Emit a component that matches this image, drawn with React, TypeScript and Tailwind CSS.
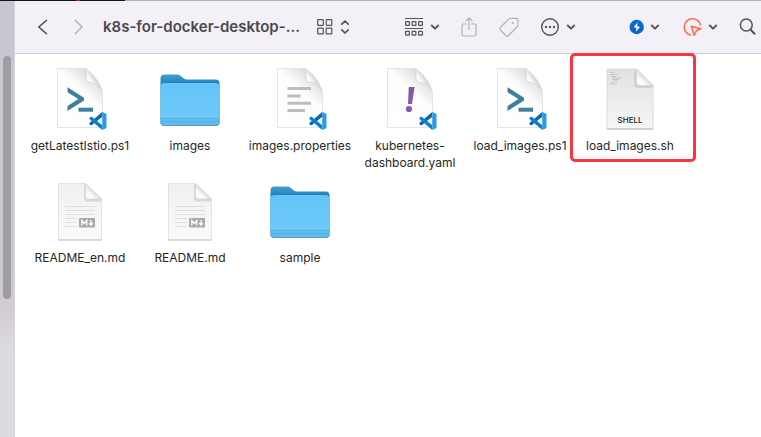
import type { ReactNode } from "react";

type Kind = "powershell" | "folder" | "properties" | "yaml" | "shell" | "markdown";

const files: { name: string; lines?: string[]; kind: Kind; marked?: boolean }[] = [
  { name: "getLatestIstio.ps1", kind: "powershell" },
  { name: "images", kind: "folder" },
  { name: "images.properties", kind: "properties" },
  { name: "kubernetes-dashboard.yaml", lines: ["kubernetes-", "dashboard.yaml"], kind: "yaml" },
  { name: "load_images.ps1", kind: "powershell" },
  { name: "load_images.sh", kind: "shell", marked: true },
  { name: "README_en.md", kind: "markdown" },
  { name: "README.md", kind: "markdown" },
  { name: "sample", kind: "folder" },
];

function Gradients() {
  return (
    <svg width="0" height="0" className="absolute" aria-hidden="true">
      <defs>
        <linearGradient id="page" x1="0.15" y1="1" x2="0.85" y2="0">
          <stop offset="0" stopColor="#ffffff" />
          <stop offset="0.6" stopColor="#fdfdfd" />
          <stop offset="0.82" stopColor="#e4e4e4" />
          <stop offset="1" stopColor="#d0d0d0" />
        </linearGradient>
        <linearGradient id="curl" x1="0" y1="1" x2="1" y2="0">
          <stop offset="0" stopColor="#ffffff" />
          <stop offset="0.4" stopColor="#f8f8f8" />
          <stop offset="0.6" stopColor="#cdcdcd" />
          <stop offset="1" stopColor="#e8e8e8" />
        </linearGradient>
        <linearGradient id="sheet" x1="0" y1="0" x2="0" y2="1">
          <stop offset="0" stopColor="#e2e2e2" />
          <stop offset="0.5" stopColor="#ececec" />
          <stop offset="1" stopColor="#f6f6f6" />
        </linearGradient>
        <linearGradient id="paper" x1="0" y1="0" x2="0" y2="1">
          <stop offset="0" stopColor="#f0f0f0" />
          <stop offset="1" stopColor="#fafafa" />
        </linearGradient>
        <linearGradient id="fold" x1="0" y1="1" x2="1" y2="0">
          <stop offset="0" stopColor="#ffffff" />
          <stop offset="0.3" stopColor="#fafafa" />
          <stop offset="0.5" stopColor="#dedede" />
        </linearGradient>
        <linearGradient id="tab" x1="0" y1="6" x2="0" y2="18" gradientUnits="userSpaceOnUse">
          <stop offset="0" stopColor="#469fd2" />
          <stop offset="1" stopColor="#1678b8" />
        </linearGradient>
        <linearGradient id="front" x1="0" y1="0" x2="0" y2="1">
          <stop offset="0" stopColor="#66c3f5" />
          <stop offset="0.8" stopColor="#6cc9fa" />
          <stop offset="0.85" stopColor="#60bef0" />
          <stop offset="1" stopColor="#5fbcec" />
        </linearGradient>
        <linearGradient id="bolt" x1="0" y1="0" x2="0" y2="1">
          <stop offset="0" stopColor="#0a6fd6" />
          <stop offset="1" stopColor="#0562cb" />
        </linearGradient>
      </defs>
    </svg>
  );
}

function CodePage({ children }: { children: ReactNode }) {
  return (
    <>
      <path d="M7.500 0.500H36Q49 11 52.500 24v35.500h-45z" fill="url(#page)" stroke="#dedede" strokeWidth="0.8" />
      <path d="M36 0.500v11.500q0 2.500 2.500 2.500q9.500 0 14 9.500Q49 11 36 0.500z" fill="url(#curl)" />
      <path d="M36 0.500v11q0 2.500 2.500 2.500q8 0 14 9" fill="none" stroke="#cdcdcd" strokeWidth="0.7" />
      {children}
      <g transform="translate(39 44) scale(0.18)">
        <path d="M72 1L2 61v5l7 7h6l59-46z" fill="#0469b0" />
        <path d="M72 99L2 39v-5l7-7h6l59 46z" fill="#0a7fd1" />
        <path d="M71 1l4-1 22 11v78L75 100l-4-1q3-2 3-6V7q0-4-3-6z" fill="#219bf0" />
      </g>
    </>
  );
}

function FileArt({ kind }: { kind: Kind }) {
  return (
    <svg viewBox="0 0 60 60" className="size-15 overflow-visible" aria-hidden="true">
      {kind === "folder" && (
        <>
          <path d="M0.500 55V10.500q0-4 4-4H17q2 0 3.500 1.300l3 2.500q1.500 1.200 3.500 1.200h28.500q4 0 4 4V55q0 2.500-3 2.500H3.500q-3 0-3-2.500z" fill="url(#tab)" />
          <path d="M0.500 19q0-4 4-4h51q4 0 4 4v35q0 3.500-3.500 3.500H4q-3.500 0-3.500-3.500z" fill="url(#front)" />
          <path d="M0.500 50.500h59M0.500 53.500h59" stroke="#50aede" strokeWidth="0.8" />
          <path d="M1 55.500q0.500 2 3 2h52q2.500 0 3-2" fill="none" stroke="#5596b8" strokeWidth="0.8" />
        </>
      )}
      {kind === "powershell" && (
        <CodePage>
          <path d="M17.500 19.300L34 29.700v2.800L17.500 43v-5l10.800-6.900L17.500 24.300z" fill="#3f809e" />
          <path d="M28.500 39.700H43v4H28.500z" fill="#3f809e" />
        </CodePage>
      )}
      {kind === "properties" && (
        <CodePage>
          <path d="M17.500 20.500h23.500M17.500 28h13M17.500 35.300h23.500M17.500 42.500h17.500" stroke="#b9bdbc" strokeWidth="3" />
        </CodePage>
      )}
      {kind === "yaml" && (
        <CodePage>
          <path d="M28.800 19h5.800l-2.600 17h-4z" fill="#8757a8" />
          <circle cx="29" cy="41" r="3.100" fill="#8757a8" />
        </CodePage>
      )}
      {kind === "shell" && (
        <>
          <path d="M7 1h29.500L53 17.500V61H7z" fill="url(#sheet)" stroke="#d6d6d6" strokeWidth="0.8" />
          <path d="M7 61h46" stroke="#b4b4b4" />
          <path d="M34 1.500v15q0 3.500 3.500 3.500H53l-1-2.500z" fill="#c3c3c3" opacity="0.6" />
          <path d="M36.500 1v13q0 3.500 3.500 3.500h13z" fill="url(#fold)" stroke="#c8c8c8" strokeWidth="0.5" />
          <path d="M10 4.500h4M10 6.500h7M11 8.500h5M12 9.800h9M12 11.500h7M13 13.200h5M11 14.800h3M10 16h7" stroke="#b2b2b2" strokeWidth="0.6" />
          <text x="30" y="55" textAnchor="middle" fontSize="8" fontWeight="500" fill="#222222" fontFamily="Inter, sans-serif">SHELL</text>
        </>
      )}
      {kind === "markdown" && (
        <>
          <path d="M8.500 3.500h27L51.500 19v41h-43z" fill="url(#paper)" stroke="#dedede" strokeWidth="0.8" />
          <path d="M8.500 60h43" stroke="#c0c0c0" />
          <path d="M34 4v14q0 3.500 3.500 3.500h14l-1-3z" fill="#c6c6c6" opacity="0.6" />
          <path d="M35.500 3.500V16q0 3 3 3h13z" fill="url(#fold)" stroke="#c8c8c8" strokeWidth="0.5" />
          <path d="M15 26.500h30M15 30.500h30M15 34.500h30M15 38.500h12M15 42.500h12M15 46.500h12" stroke="#dfdfdf" />
          <rect x="29" y="38" width="16" height="9.500" rx="1" fill="#a9a9a9" />
          <path d="M31.800 45.500v-5l2.500 3 2.500-3v5" fill="none" stroke="#ffffff" strokeWidth="1.300" />
          <path d="M41 40v4.500M39.200 43l1.800 2.200 1.800-2.200" fill="none" stroke="#ffffff" strokeWidth="1.300" />
        </>
      )}
    </svg>
  );
}

function Down() {
  return (
    <svg viewBox="0 0 8 8" className="size-2 overflow-visible" fill="none" stroke="#55535a" strokeWidth="1.800" strokeLinecap="round" strokeLinejoin="round">
      <path d="M0.800 2.500L4 5.700l3.200-3.200" />
    </svg>
  );
}

function ToolButton({ label, children }: { label: string; children: ReactNode }) {
  return (
    <button type="button" aria-label={label} className="flex shrink-0 items-center gap-2">
      {children}
    </button>
  );
}

function Toolbar() {
  return (
    <header className="flex h-[53px] items-center border-b border-[#d3d1d6] bg-[#f3f0f7] pr-1.5 pl-[22px] text-[#55535a]">
      <nav className="flex items-center gap-6">
        <ToolButton label="Back">
          <svg viewBox="0 0 12 16" className="h-4 w-3" fill="none" stroke="#4b494f" strokeWidth="1.500" strokeLinecap="round" strokeLinejoin="round">
            <path d="M9.500 1.300L1.800 8l7.700 6.700" />
          </svg>
        </ToolButton>
        <ToolButton label="Forward">
          <svg viewBox="0 0 12 16" className="h-4 w-3" fill="none" stroke="#b4b1b8" strokeWidth="1.500" strokeLinecap="round" strokeLinejoin="round">
            <path d="M2.300 1.300L9 8l-6.700 6.700" />
          </svg>
        </ToolButton>
      </nav>
      <h1 className="ml-[18px] w-[196px] shrink-0 text-[15px] leading-5 font-semibold whitespace-nowrap text-[#4b494f]">k8s-for-docker-desktop-...</h1>
      <div className="ml-[18px] flex">
        <ToolButton label="View as icons">
          <svg viewBox="0 0 16 16" className="size-4" fill="none" stroke="currentColor" strokeWidth="1.200">
            <rect x="0.700" y="0.700" width="5.600" height="5.600" rx="0.600" />
            <rect x="9.200" y="0.700" width="5.600" height="5.600" rx="0.600" />
            <rect x="0.700" y="9.200" width="5.600" height="5.600" rx="0.600" />
            <rect x="9.200" y="9.200" width="5.600" height="5.600" rx="0.600" />
          </svg>
          <svg viewBox="0 0 8 14" className="h-3.5 w-2 overflow-visible" fill="none" stroke="currentColor" strokeWidth="1.700" strokeLinecap="round" strokeLinejoin="round">
            <path d="M0.800 4.200L4 1l3.200 3.200M0.800 9.800L4 13l3.200-3.200" />
          </svg>
        </ToolButton>
      </div>
      <div className="ml-auto flex items-center gap-[22px]">
        <ToolButton label="Group items">
          <svg viewBox="0 0 18 18" className="size-4.5 overflow-visible" fill="none" stroke="currentColor" strokeWidth="1.200">
            <path d="M0 0.500h18M0 10.500h18" />
            <rect x="0.600" y="3.600" width="3.800" height="3.800" rx="0.500" />
            <rect x="7.100" y="3.600" width="3.800" height="3.800" rx="0.500" />
            <rect x="13.600" y="3.600" width="3.800" height="3.800" rx="0.500" />
            <rect x="0.600" y="13.400" width="3.800" height="3.800" rx="0.500" />
            <rect x="7.100" y="13.400" width="3.800" height="3.800" rx="0.500" />
            <rect x="13.600" y="13.400" width="3.800" height="3.800" rx="0.500" />
          </svg>
          <Down />
        </ToolButton>
        <ToolButton label="Share">
          <svg viewBox="0 0 16 20" className="h-5 w-4" fill="none" stroke="#b4b1b8" strokeWidth="1.200" strokeLinecap="round" strokeLinejoin="round">
            <path d="M5.300 7H2.400Q1 7 1 8.400v9.200Q1 19 2.400 19h11.200q1.400 0 1.400-1.400V8.400Q15 7 13.600 7h-2.900M8 12.500V1M4.800 4L8 0.900 11.200 4" />
          </svg>
        </ToolButton>
        <ToolButton label="Edit tags">
          <svg viewBox="0 0 20 20" className="size-5" fill="none" stroke="#b4b1b8" strokeWidth="1.200" strokeLinejoin="round">
            <path d="M11.200 1.500l5.500-0.400q2.100 0 2.200 2.100l-0.200 5.300q-0.100 0.800-0.700 1.500l-8.400 8.500q-1.400 1.300-2.800 0L1.400 13q-1.300-1.400 0-2.800l8.400-8.100q0.600-0.500 1.400-0.600z" />
            <circle cx="13.700" cy="6" r="1" fill="#b4b1b8" strokeWidth="0.300" />
          </svg>
        </ToolButton>
        <ToolButton label="More actions">
          <svg viewBox="0 0 18 18" className="size-4.5 overflow-visible" fill="none" stroke="currentColor" strokeWidth="1.400">
            <circle cx="9" cy="9" r="8.300" />
            <g fill="currentColor" stroke="none">
              <circle cx="5" cy="9" r="1.200" />
              <circle cx="9" cy="9" r="1.200" />
              <circle cx="13" cy="9" r="1.200" />
            </g>
          </svg>
          <Down />
        </ToolButton>
        <div className="ml-8 flex items-center gap-6">
          <ToolButton label="Quick actions">
            <svg viewBox="0 0 14 14" className="size-3.5 overflow-visible">
              <circle cx="7.700" cy="7" r="7.200" fill="url(#bolt)" />
              <path d="M8.500 2.400L4.700 7.200l2.800 0.600-0.700 4L11 6.900 8.200 6.200z" fill="#ffffff" />
            </svg>
            <Down />
          </ToolButton>
          <ToolButton label="Pointer actions">
            <svg viewBox="0 0 18 18" className="size-4.5 overflow-visible" fill="none" stroke="#ff6a4d" strokeWidth="1.500" strokeLinejoin="round">
              <path d="M17.600 7.300A8.300 8.300 0 1 0 8 17.200" />
              <path d="M8.300 8.300l9.500 2.500-4.500 2-2.200 4.500z" />
            </svg>
            <Down />
          </ToolButton>
        </div>
        <ToolButton label="Search">
          <svg viewBox="0 0 16 18" className="h-4.5 w-4 overflow-visible" fill="none" stroke="currentColor" strokeLinecap="round">
            <circle cx="7.300" cy="7" r="5.900" strokeWidth="1.500" />
            <path d="M11.700 11.700l3.800 4" strokeWidth="2" />
          </svg>
        </ToolButton>
      </div>
    </header>
  );
}

export default function App() {
  return (
    <div className="flex min-h-screen flex-col bg-white font-[Inter,'Noto_Sans',sans-serif]">
      <Gradients />
      <div className="h-px bg-[linear-gradient(90deg,#14121c_76px,#c01828_76px,#c01828_80px,#14121c_80px,#14121c_125px,#b3b0b6_125px)]" />
      <div className="flex flex-1">
        <aside className="w-[15px] shrink-0 border-r border-[#d6d3db] bg-[linear-gradient(#c9c6d0,#cbc8d1_270px,#d3cdd5_310px,#dddae1_350px)] pt-[55px] pl-[3px]">
          <div className="h-[243px] w-2 rounded-full bg-[#9f9ca3]" />
        </aside>
        <main className="min-w-0 flex-1">
          <Toolbar />
          <ul className="grid auto-rows-[112px] grid-cols-[repeat(auto-fill,110px)] pt-3.5 pl-2.5">
            {files.map((file) => (
              <li key={file.name} className="relative flex flex-col items-center gap-[9px]">
                <FileArt kind={file.kind} />
                <span className="text-center text-[12px] leading-[17px] whitespace-nowrap text-[#262626]">
                  {(file.lines ?? [file.name]).map((line) => (
                    <span key={line} className="block">{line}</span>
                  ))}
                </span>
                {file.marked && <div className="absolute -top-[15px] -right-[11px] -left-[5px] h-[109px] rounded-[5px] border-3 border-[#fb3440]" />}
              </li>
            ))}
          </ul>
        </main>
      </div>
    </div>
  );
}
